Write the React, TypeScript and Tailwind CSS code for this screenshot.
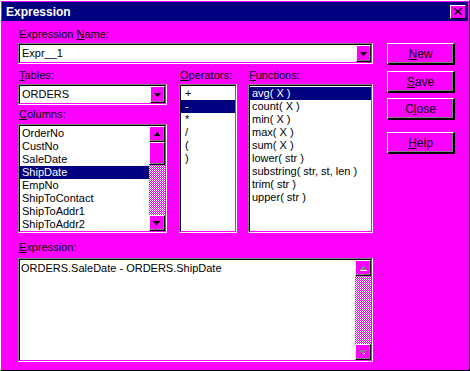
import React from "react";

const MAGENTA = "bg-[#ff00ff]";

function U({ children }: { children: React.ReactNode }) {
  return <span className="underline underline-offset-[1px] decoration-1">{children}</span>;
}

function Sunken({ className, inner, children }: { className?: string; inner?: string; children?: React.ReactNode }) {
  return (
    <div className={"flex border-t border-l border-[#808080] border-b border-r border-b-white border-r-white " + (className || "")}>
      <div className={"flex-1 flex min-w-0 border-t border-l border-black border-b border-r border-b-[#ff00ff] border-r-[#ff00ff] bg-white " + (inner || "")}>
        {children}
      </div>
    </div>
  );
}

// dithered scrollbar track, built from 1px striped rows
const trackRows = Array.from({ length: 90 }, (_, i) => i);
function Track() {
  return (
    <div className="h-0 flex-1 overflow-hidden">
      {trackRows.map((i) => (
        <div
          key={i}
          className={
            "h-[1px] " +
            (i % 2 === 0
              ? "bg-[repeating-linear-gradient(90deg,#ffffff_0px_1px,#ff00ff_1px_2px)]"
              : "bg-[repeating-linear-gradient(90deg,#ff00ff_0px_1px,#ffffff_1px_2px)]")
          }
        />
      ))}
    </div>
  );
}

function Arrow({ up, disabled }: { up?: boolean; disabled?: boolean }) {
  const fill = disabled ? "#808080" : "#000";
  return (
    <div className={"w-[16px] h-[16px] shrink-0 flex items-center justify-center border-t border-l border-white border-b border-r border-b-black border-r-black shadow-[inset_-1px_-1px_0_#808080] " + MAGENTA}>
      <svg width="8" height="5" viewBox="0 0 8 5" shapeRendering="crispEdges">
        {disabled && (up ? <polygon points="1,5 8,5 8,4 1,4" fill="#fff" /> : <polygon points="5,3 6,3 4,5 3,5" fill="#fff" />)}
        {up ? <polygon points="4,0 7,4 0,4 " fill={fill} transform="translate(0.5,0)" /> : <polygon points="0,0 7,0 3.5,4" fill={fill} />}
      </svg>
    </div>
  );
}

function Combo({ value }: { value: string }) {
  return (
    <Sunken className="h-[21px]" inner="items-stretch">
      <div className="flex-1 pl-[2px] text-[11px] leading-[17px] text-black">{value}</div>
      <div className={"w-[15px] flex items-center justify-center border-t border-l border-white border-b border-r border-b-black border-r-black shadow-[inset_-1px_-1px_0_#808080] " + MAGENTA}>
        <svg width="7" height="4" viewBox="0 0 7 4"><polygon points="0,0 7,0 3.5,4" fill="#000" /></svg>
      </div>
    </Sunken>
  );
}

function Row({ text, sel, pad = "pl-[2px]" }: { text: string; sel?: boolean; pad?: string }) {
  return (
    <div className={"h-[13px] leading-[13px] whitespace-nowrap overflow-hidden " + pad + (sel ? " bg-[#000080] text-white" : " text-black")}>
      {text}
    </div>
  );
}

function Btn({ children, className }: { children: React.ReactNode; className?: string }) {
  return (
    <div className={"h-[22px] w-[68px] flex items-center justify-center text-[12px] text-black border-t border-l border-white border-b-2 border-r-2 border-b-black border-r-black shadow-[inset_-1px_-1px_0_#808080] " + MAGENTA + " " + (className || "")}>
      {children}
    </div>
  );
}

const columns = ["OrderNo", "CustNo", "SaleDate", "ShipDate", "EmpNo", "ShipToContact", "ShipToAddr1", "ShipToAddr2"];
const ops = ["+", "-", "*", "/", "(", ")"];
const funcs = ["avg( X )", "count( X )", "min( X )", "max( X )", "sum( X )", "lower( str )", "substring( str, st, len )", "trim( str )", "upper( str )"];

export default function App() {
  return (
    <div className={"w-[470px] h-[371px] flex flex-col border-t border-l border-white border-b border-r border-b-black border-r-black p-[1px] font-['Liberation_Sans',Arial,sans-serif] text-[11px] " + MAGENTA}>
      {/* title bar */}
      <div className="h-[19px] bg-[#000080] flex items-center justify-between pl-[4px] pr-[2px]">
        <span className="text-white font-bold text-[12px]">Expression</span>
        <div className={"w-[16px] h-[14px] flex items-center justify-center border-t border-l border-white border-b border-r border-b-black border-r-black " + MAGENTA}>
          <svg width="8" height="7" viewBox="0 0 8 7"><path d="M0.5 0.5 L7.5 6.5 M7.5 0.5 L0.5 6.5" stroke="#000" strokeWidth="1.4" /></svg>
        </div>
      </div>

      <div className="flex pl-[16px] pt-[7px]">
        {/* left side */}
        <div className="w-[355px] flex flex-col">
          <div className="h-[13px] leading-[13px] mb-[2px] pl-[1px]">Expression <U>N</U>ame:</div>
          <Combo value="Expr__1" />

          <div className="flex mt-[5px] h-[164px]">
            <div className="w-[149px] flex flex-col">
              <div className="h-[13px] leading-[13px] mb-[2px] pl-[1px]"><U>T</U>ables:</div>
              <Combo value="ORDERS" />
              <div className="h-[13px] leading-[13px] mt-[3px] mb-[3px] pl-[1px]"><U>C</U>olumns:</div>
              <Sunken className="flex-1 min-h-0">
                <div className="flex-1 pt-[1px] overflow-hidden">
                  {columns.map((c) => <Row key={c} text={c} sel={c === "ShipDate"} />)}
                </div>
                <div className="w-[16px] flex flex-col">
                  <Arrow up />
                  <div className={"h-[23px] shrink-0 border-t border-l border-white border-b border-r border-b-black border-r-black shadow-[inset_-1px_-1px_0_#808080] " + MAGENTA} />
                  <Track />
                  <Arrow />
                </div>
              </Sunken>
            </div>

            <div className="w-[58px] ml-[12px] flex flex-col">
              <div className="h-[13px] leading-[13px] mb-[2px] pl-[1px]"><U>O</U>perators:</div>
              <Sunken className="flex-1">
                <div className="flex-1 pt-[1px]">
                  {ops.map((o) => <Row key={o} text={o} sel={o === "-"} pad="pl-[4px]" />)}
                </div>
              </Sunken>
            </div>

            <div className="w-[125px] ml-[11px] flex flex-col">
              <div className="h-[13px] leading-[13px] mb-[2px] pl-[1px]"><U>F</U>unctions:</div>
              <Sunken className="flex-1">
                <div className="flex-1 pt-[1px] overflow-hidden">
                  {funcs.map((f) => <Row key={f} text={f} sel={f === "avg( X )"} />)}
                </div>
              </Sunken>
            </div>
          </div>

          <div className="h-[13px] leading-[13px] mt-[8px] mb-[4px] pl-[1px]"><U>E</U>xpression:</div>
          <Sunken className="h-[104px]">
            <div className="flex-1 pl-[1px] pt-[2px] leading-[13px]">ORDERS.SaleDate - ORDERS.ShipDate</div>
            <div className="w-[16px] flex flex-col">
              <Arrow up disabled />
              <Track />
              <Arrow disabled />
            </div>
          </Sunken>
        </div>

        {/* buttons */}
        <div className="ml-[14px] mt-[15px] flex flex-col">
          <Btn><U>N</U>ew</Btn>
          <Btn className="mt-[6px]"><U>S</U>ave</Btn>
          <Btn className="mt-[5px]">C<U>l</U>ose</Btn>
          <Btn className="mt-[12px]"><U>H</U>elp</Btn>
        </div>
      </div>
    </div>
  );
}
